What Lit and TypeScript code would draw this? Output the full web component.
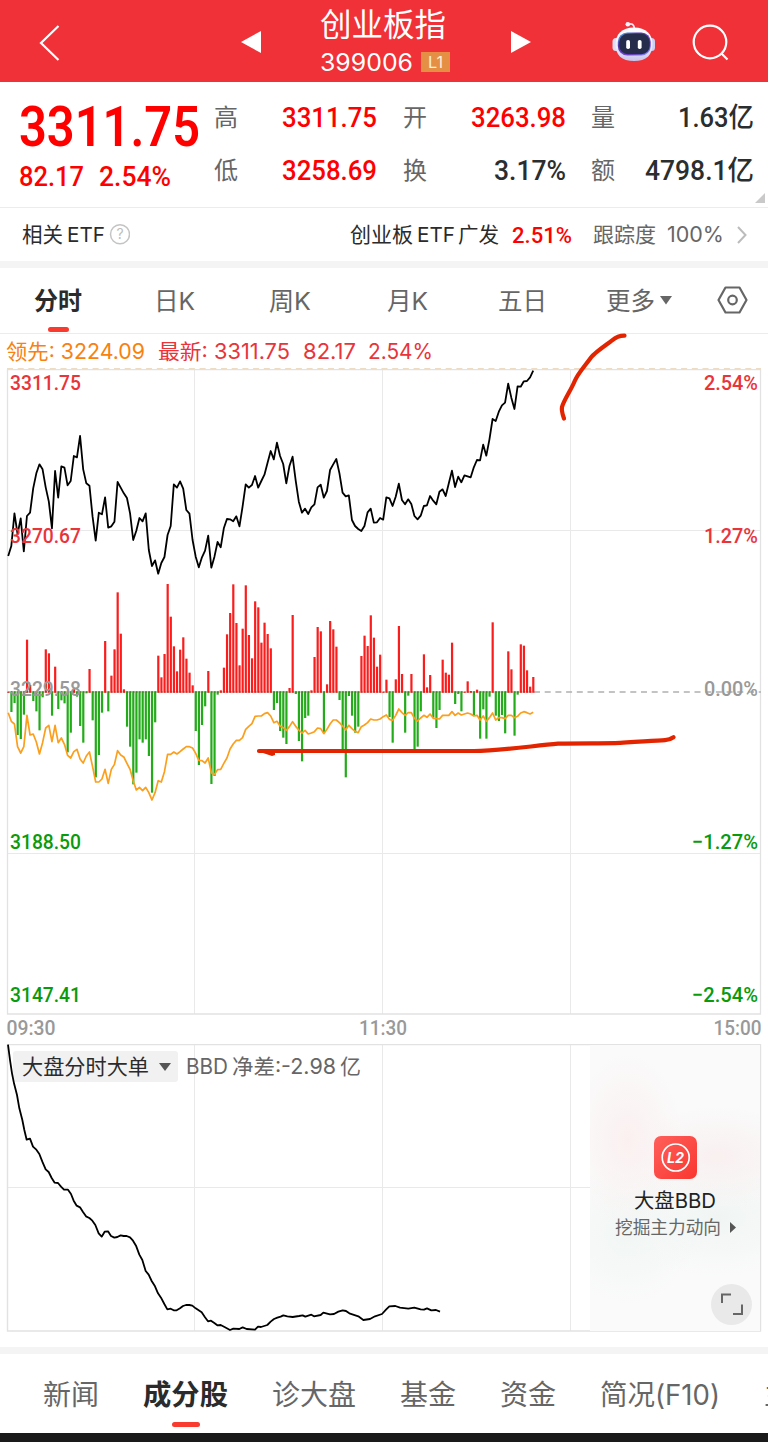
import { LitElement, html, svg, css } from "lit";
import { customElement } from "lit/decorators.js";

// Per-minute series, stored in thirds of a pixel on the chart canvas.
const PRICE = [588,558,460,522,475,574,468,458,385,340,313,328,382,425,505,333,413,319,323,376,363,288,292,228,328,370,377,470,542,458,463,412,503,499,485,366,383,400,414,460,540,512,474,484,460,570,618,601,641,609,591,525,498,373,383,364,386,450,461,540,590,622,592,572,527,623,590,546,562,505,477,478,484,469,499,440,373,383,375,348,383,363,344,308,273,298,248,288,312,370,318,290,362,425,458,446,462,442,433,382,374,413,393,330,313,297,340,398,409,406,480,498,507,513,498,457,446,488,487,474,479,412,415,438,410,371,420,433,418,432,468,478,467,438,436,408,422,433,395,388,408,370,332,381,350,367,346,349,352,322,300,301,254,287,238,177,183,155,136,128,71,113,147,79,80,64,63,52,32];
const FLOW = [365,426,399,495,507,434,209,345,393,424,481,382,238,250,437,290,417,391,400,547,488,355,380,468,518,370,297,451,622,555,428,213,424,317,238,67,191,358,470,530,643,608,508,518,508,558,668,457,257,322,252,42,140,229,304,239,202,266,308,346,483,585,465,409,303,642,618,374,361,293,193,129,43,159,286,176,46,195,265,94,112,218,158,192,235,420,399,483,503,522,354,135,372,513,574,444,437,361,261,171,184,488,343,153,178,230,390,538,622,378,437,488,470,258,197,228,136,203,290,254,365,329,441,518,328,168,312,488,377,312,538,530,424,253,352,315,443,474,420,269,308,314,218,402,372,424,365,334,363,436,359,506,418,506,380,157,437,453,435,490,244,298,497,374,223,227,301,350,321];
const LEAD = [428,454,462,530,549,530,436,495,492,516,552,518,474,466,515,466,518,504,523,556,564,545,538,567,579,558,546,590,636,636,627,598,640,598,583,542,555,561,580,598,632,660,652,662,652,668,690,668,632,636,605,553,553,546,552,545,537,530,530,534,550,571,572,579,564,608,614,599,598,580,564,537,522,511,511,503,478,469,461,439,438,438,431,428,438,458,454,468,473,481,470,455,469,480,489,481,492,489,485,474,476,491,478,462,450,450,458,468,480,466,476,484,488,470,465,458,447,450,450,447,440,435,448,451,436,417,428,436,428,428,445,453,444,436,442,432,445,446,447,436,436,436,425,436,429,435,432,429,432,438,436,450,438,454,443,429,450,443,443,446,436,436,443,439,429,425,428,432,427];
const BBD = "24,104 30,150 36,190 42,220 51,255 58,295 67,330 73,360 80,389 90,386 99,410 108,418 118,432 127,455 137,478 146,486 155,504 164,518 174,519 183,530 192,539 204,539 213,552 221,572 230,587 240,592 249,606 258,619 268,624 277,632 286,645 296,670 305,680 314,665 324,664 333,678 343,683 352,681 362,676 371,678 380,678 390,682 399,692 408,707 418,734 427,750 437,783 446,794 455,813 465,829 474,850 483,863 493,882 502,898 512,896 521,901 530,901 540,895 549,888 558,885 568,885 577,887 587,895 605,907 615,922 624,934 633,932 643,939 652,946 662,945 675,952 690,960 700,956 718,957 728,952 740,957 765,959 774,950 783,951 802,945 812,935 822,927 832,923 842,920 850,916 862,919 878,921 897,918 908,916 916,920 934,914 942,919 962,915 970,908 990,913 1002,912 1015,905 1028,901 1038,903 1048,910 1075,919 1090,930 1110,927 1125,919 1146,912 1158,899 1168,889 1186,888 1200,893 1225,896 1243,893 1262,898 1272,899 1281,895 1294,901 1308,900 1320,905";

const X0 = 8.2;
const STEP = 3.125;
const BASE = 692;

const line = (data: number[], top: number) =>
  data.map((v, i) => `${(X0 + i * STEP).toFixed(2)},${(top + v / 3).toFixed(2)}`).join(" ");

// A run of text fitted to an exact advance width.
const label = (text: string, width: number, size: number, cls = "") => html`<svg
  class="label ${cls}" width=${width} height=${size} font-size=${size}>
  <text x="0" y=${size * 0.87} textLength=${width} lengthAdjust="spacingAndGlyphs">${text}</text>
</svg>`;

@customElement("quote-header")
export class QuoteHeader extends LitElement {
  static styles = css`
    :host { display: block; height: 82px; background: #f03137; color: #fff; font-family: Inter, "Noto Sans CJK SC", sans-serif; }
    .bar { height: 82px; display: grid; grid-template-columns: 241px 79px 130px 60px 102px 80px 76px; }
    .label { display: block; overflow: visible; fill: currentColor; }
    .mid { display: flex; flex-direction: column; padding-top: 7.500px; }
    .code { display: flex; align-items: center; gap: 8px; margin-top: 10.500px; }
    .badge { width: 29px; height: 20px; background: #e58f44; display: flex; align-items: center; justify-content: center; color: #fdf0df; }
    .icon { display: block; overflow: visible; }
  `;
  render() {
    return html`<div class="bar">
      <svg class="icon" width="241" height="82"><path d="M58.500 26 41 43l17.500 17" fill="none" stroke="#fff" stroke-width="2.200"/></svg>
      <svg class="icon" width="79" height="82"><path d="M0 42 20 31v22z" fill="#fff"/></svg>
      <div class="mid">
        ${label("创业板指", 126, 32)}
        <div class="code">${label("399006", 93, 24.5)}<div class="badge">${label("L1", 15, 16)}</div></div>
      </div>
      <svg class="icon" width="60" height="82"><path d="M81 42 61 31v22z" fill="#fff"/></svg>
      <span></span>
      <svg class="icon" width="80" height="82" viewBox="612 0 80 82">
        <defs>
          <linearGradient id="shell" x1="0" y1="0" x2="0" y2="1"><stop offset="0" stop-color="#fff"/><stop offset=".6" stop-color="#ececfb"/><stop offset="1" stop-color="#c5c3ec"/></linearGradient>
          <linearGradient id="visor" x1="0" y1="0" x2="1" y2="1"><stop offset="0" stop-color="#4bbcf0"/><stop offset=".3" stop-color="#5535a8"/><stop offset=".7" stop-color="#7d48dc"/><stop offset="1" stop-color="#7a9bf4"/></linearGradient>
        </defs>
        <path d="M628 24.500q6-2.500 6.300 4.500" fill="none" stroke="#f3e8f5" stroke-width="1.800"/>
        <circle cx="627.800" cy="24.300" r="2.300" fill="#f8f4fb"/>
        <rect x="612.500" y="38" width="8" height="13" rx="3.500" fill="#dcdcf4"/><rect x="647" y="38" width="8" height="13" rx="3.500" fill="#c9d0f4"/>
        <path d="M634 27.500c12 0 18.500 7 18.500 16.500 0 11-6 17-18.500 17s-18.500-6-18.500-17c0-9.500 6.500-16.500 18.500-16.500z" fill="url(#shell)"/>
        <rect x="617.800" y="32.500" width="33" height="23" rx="9.500" fill="url(#visor)"/>
        <rect x="619.300" y="33.700" width="30.500" height="20.500" rx="8.500" fill="#262d4c"/>
        <rect x="626.200" y="40" width="3.800" height="9" rx="1.800" fill="#fff"/><rect x="637.800" y="40" width="3.800" height="9" rx="1.800" fill="#fff"/>
      </svg>
      <svg class="icon" width="76" height="82"><g fill="none" stroke="#fff" stroke-width="2.200"><circle cx="18" cy="42" r="16.300"/><path d="m29 53 6.500 6.500"/></g></svg>
    </div>`;
  }
}

@customElement("quote-stats")
export class QuoteStats extends LitElement {
  static styles = css`
    :host { display: block; background: #fff; font-family: Roboto, "Noto Sans CJK SC", sans-serif; font-weight: 500; }
    .panel { position: relative; height: 126px; display: grid; grid-template-columns: 195px 540px; border-bottom: 1px solid #ececec; padding-left: 19px; box-sizing: border-box; }
    .label { display: block; overflow: visible; fill: currentColor; }
    .red { color: #fd0101; }
    .dark { color: #2b2e2f; }
    .tag { color: #666; font-weight: 400; }
    .last { padding-top: 15px; }
    .big { font-weight: 600; }
    .change { display: flex; gap: 15px; margin-top: 9px; margin-left: -0.500px; }
    .grid { display: grid; grid-template-columns: 163px 163px 163px; column-gap: 25.500px; row-gap: 28px; padding-top: 22.500px; align-content: start; }
    .cell { display: flex; justify-content: space-between; align-items: center; height: 25px; }
    .corner { position: absolute; right: 3px; bottom: 4px; }
  `;
  render() {
    const cells: [string, string, number, string][] = [
      ["高", "3311.75", 95, "red"], ["开", "3263.98", 95, "red"], ["量", "1.63亿", 76, "dark"],
      ["低", "3258.69", 95, "red"], ["换", "3.17%", 72, "dark"], ["额", "4798.1亿", 109, "dark"],
    ];
    return html`<div class="panel">
      <div class="last">
        ${label("3311.75", 181, 56, "red big")}
        <div class="change red">${label("82.17", 65, 27)}${label("2.54%", 72, 27)}</div>
      </div>
      <div class="grid">${cells.map(([k, v, w, c]) => html`<div class="cell">${label(k, 24, 24, "tag")}${label(v, w, 27.5, c)}</div>`)}</div>
      <svg class="corner" width="10" height="10"><path d="M10 0v10H0z" fill="#c9c9c9"/></svg>
    </div>`;
  }
}

@customElement("etf-row")
export class EtfRow extends LitElement {
  static styles = css`
    :host { display: block; background: #fff; border-bottom: 7px solid #f4f4f4; font-family: Inter, "Noto Sans CJK SC", sans-serif; }
    .row { height: 53px; display: flex; align-items: center; padding: 0 21px 0 22px; }
    .label { display: block; overflow: visible; fill: currentColor; flex: none; }
    .dark { color: #2b2b2b; }
    .etf { margin: 0 3.500px 0 4px; }
    .red { color: #fd0101; font-weight: 500; margin: 0 21px 0 13px; font-family: Roboto, sans-serif; }
    .gray { color: #666; }
    .space { flex: 1; }
    .pct { margin: 0 13px 0 11px; }
  `;
  render() {
    return html`<div class="row">
      ${label("相关", 41, 21, "dark")}${label("ETF", 38, 20.5, "dark etf")}
      <svg width="21" height="21"><circle cx="11" cy="10.300" r="9.500" fill="none" stroke="#c4c4c4" stroke-width="1.500"/><text x="11" y="15.300" text-anchor="middle" font-size="14" fill="#bdbdbd">?</text></svg>
      <span class="space"></span>
      ${label("创业板", 63, 21, "dark")}${label("ETF", 38, 20.5, "dark etf")}${label("广发", 41, 21, "dark")}
      ${label("2.51%", 60, 22.5, "red")}
      ${label("跟踪度", 63, 21, "gray")}${label("100%", 57, 21, "gray pct")}
      <svg width="10" height="20"><path d="m1 2 7.500 8L1 18" fill="none" stroke="#bcbcbc" stroke-width="2"/></svg>
    </div>`;
  }
}

@customElement("period-tabs")
export class PeriodTabs extends LitElement {
  static styles = css`
    :host { display: block; background: #fff; border-bottom: 1px solid #ececec; font-family: Inter, "Noto Sans CJK SC", sans-serif; }
    .tabs { height: 65px; display: grid; grid-template-columns: 120px 115px 118px 111px 108px 111px 31px; padding-left: 34px; color: #666; }
    .tab { display: flex; flex-direction: column; padding-top: 21px; }
    .row { display: flex; align-items: center; gap: 5px; }
    .label { display: block; overflow: visible; fill: currentColor; }
    .on { color: #2b2b2b; font-weight: 700; }
    .mark { width: 21px; height: 5px; border-radius: 2.500px; background: #f93a2f; margin: 13px 0 0 14px; }
    .gear { display: block; margin-top: 18px; }
  `;
  render() {
    return html`<div class="tabs">
      <div class="tab on">${label("分时", 48, 24.5)}<div class="mark"></div></div>
      <div class="tab">${label("日K", 41, 24.5)}</div>
      <div class="tab">${label("周K", 42, 24.5)}</div>
      <div class="tab">${label("月K", 41, 24.5)}</div>
      <div class="tab">${label("五日", 49, 24.5)}</div>
      <div class="tab"><div class="row">${label("更多", 49, 24.5)}<svg width="12" height="10"><path d="M0 0h12L6 8.500z" fill="#666"/></svg></div></div>
      <svg class="gear" width="32" height="28"><g fill="none" stroke="#666" stroke-width="2.200"><path d="M8.500 1.500h14L29.500 14l-7 12.500h-14L1.500 14z" stroke-linejoin="round"/><circle cx="15.500" cy="14" r="4.300"/></g></svg>
    </div>`;
  }
}

@customElement("minute-chart")
export class MinuteChart extends LitElement {
  static styles = css`
    :host { display: block; background: #fff; font-family: Roboto, "Noto Sans CJK SC", sans-serif; }
    .legend { height: 35px; padding-left: 6px; display: flex; align-items: center; font-family: Inter, "Noto Sans CJK SC", sans-serif; }
    .label { display: block; overflow: visible; fill: currentColor; }
    .orange { color: #f88110; margin-right: 13px; }
    .red { color: #e9343a; }
    .change { margin: 0 12.500px; }
    .plot { display: block; overflow: visible; position: relative; z-index: 1; }
    .axis { font-size: 21px; font-weight: 500; }
    .up { fill: #e9343a; }
    .down { fill: #0a9a0a; }
    .flat { fill: #999; }
    .stroke { fill: none; stroke: #e22500; stroke-linecap: round; stroke-linejoin: round; stroke-width: 4.200; }
  `;
  render() {
    const rows: [string, string, number, string][] = [
      ["3311.75", "2.54%", 390, "up"], ["3270.67", "1.27%", 543, "up"], ["3229.58", "0.00%", 695.5, "flat"],
      ["3188.50", "−1.27%", 849, "down"], ["3147.41", "−2.54%", 1002, "down"],
    ];
    return html`
      <div class="legend">
        ${label("领先: 3224.09", 139, 21, "orange")}
        ${label("最新: 3311.75", 132, 21, "red")}
        ${label("82.17", 53, 21, "red change")}
        ${label("2.54%", 65, 21, "red")}
      </div>
      <svg class="plot" width="768" height="675" viewBox="0 369 768 675">
        <g stroke="#e9e9e9" fill="none">
          <path d="M8 530.500H761M8 853.500H761M194.500 369V1014M382.500 369V1014M570.500 369V1014"/>
          <path d="M7.500 369.700H760.500V1014H7.500z" stroke="#e2e2e2" stroke-width="1.300"/>
        </g>
        <path d="M7 368.800H761" stroke="#eddcc3" stroke-width="1.500" stroke-dasharray="6 4.700"/>
        <path d="M534 692H761" stroke="#b0b0b0" stroke-width="1.600" stroke-dasharray="6 4.700"/>
        ${FLOW.map((v, i) => {
          const end = 570 + v / 3;
          const up = v < 367;
          const x = X0 + i * STEP - 1;
          return svg`<rect x=${x} y=${up ? end : BASE - 0.8} width="2.200" height=${up ? BASE + 0.8 - end : end - BASE + 0.8} fill=${up ? "#fb1c1c" : "#23ab1a"}></rect>`;
        })}
        <path d="M8 692H533" stroke="#70402c" stroke-opacity=".6" stroke-width="1" stroke-dasharray="2 1.125"/>
        <polyline points=${line(LEAD, 570)} fill="none" stroke="#fb9f1c" stroke-width="1.700" stroke-linejoin="round"/>
        <polyline points=${line(PRICE, 360)} fill="none" stroke="#000" stroke-width="1.800" stroke-linejoin="round"/>
        <g class="axis">
          ${rows.map(([l, r, y, c]) => svg`
            <text class=${c} x="10" y=${y} textLength="71" lengthAdjust="spacingAndGlyphs">${l}</text>
            <text class=${c} x="758" y=${y} text-anchor="end" textLength=${r.length > 5 ? 66 : 54} lengthAdjust="spacingAndGlyphs">${r}</text>`)}
          <text class="flat" x="6.500" y="1035" textLength="49" lengthAdjust="spacingAndGlyphs">09:30</text>
          <text class="flat" x="359" y="1035" textLength="48" lengthAdjust="spacingAndGlyphs">11:30</text>
          <text class="flat" x="713.500" y="1035" textLength="48" lengthAdjust="spacingAndGlyphs">15:00</text>
        </g>
        <path class="stroke" d="M624.500 335.700C617 335.500 614 339 610 342C603 347 594 353.500 591 357.500C585 366 578 373 574.500 381.500C571 390 564 400 562 407C561.200 411 563 415.500 564 418.500"/>
        <path class="stroke" d="M259 751H474C500 751 535 745.500 558 743.700C580 743 600 743.500 615 743.200C632 742.500 655 740.500 665 740.200C669 740 671 739 673.500 737.200"/>
        <path d="M257 751 272 756 275 755V751z" fill="#e22500"/>
      </svg>`;
  }
}

@customElement("bbd-chart")
export class BbdChart extends LitElement {
  static styles = css`
    :host { display: block; background: #fff; border-bottom: 7px solid #f4f4f4; font-family: Inter, "Noto Sans CJK SC", sans-serif; }
    .wrap { position: relative; height: 303px; display: flex; justify-content: space-between; align-items: flex-start; padding-right: 8px; }
    .plot { position: absolute; left: 0; top: 0; }
    .label { display: block; overflow: visible; fill: currentColor; }
    .head { position: relative; display: flex; align-items: center; padding: 7px 0 0 13px; gap: 4px; color: #666; }
    .pick { width: 165px; height: 31px; box-sizing: border-box; border-radius: 3px; background: #f1f1f1; display: flex; align-items: center; padding-left: 9px; gap: 10px; margin-right: 4px; color: #2b2b2b; }
    .promo { position: relative; width: 170px; height: 286px; margin-top: 1px; box-sizing: border-box; padding-top: 91px; display: flex; flex-direction: column; align-items: center;
      background:
        radial-gradient(ellipse 55px 85px at 22% 33%, #fbf0f0 0%, #fbf0f000 100%),
        radial-gradient(ellipse 90px 50px at 75% 39%, #f9f0f0 0%, #f9f0f000 100%),
        radial-gradient(ellipse 70px 70px at 22% 66%, #f1f6f4 0%, #f1f6f400 100%),
        radial-gradient(ellipse 100px 60px at 75% 60%, #f0f5f3 0%, #f0f5f300 100%), #fafafa; }
    .name { margin-top: 11px; color: #222; }
    .more { display: flex; align-items: center; gap: 9px; margin: 8px 0 0 1px; color: #666; }
    .full { position: absolute; right: 8px; bottom: 6px; width: 41px; height: 41px; }
    .l2 { font: italic 700 15px Inter, sans-serif; }
  `;
  render() {
    return html`<div class="wrap">
      <svg class="plot" width="768" height="303">
        <g fill="none" stroke="#e9e9e9"><path d="M8 143.500H590M194.500 1V287M382.500 1V287M570.500 1V287"/><path d="M7.500 .5H760.500V287H7.500z" stroke="#e2e2e2" stroke-width="1.400"/></g>
      </svg>
      <div class="head">
        <div class="pick">${label("大盘分时大单", 127, 21)}<svg width="12" height="8"><path d="M0 0h12L6 8z" fill="#555"/></svg></div>
        ${label("BBD", 42, 21)}${label("净差:-2.98", 104, 21)}${label("亿", 21, 21)}
      </div>
      <svg class="plot" width="590" height="303" viewBox="0 1044 590 303"><g transform="translate(0 1010) scale(.33333)"><polyline points=${BBD} fill="none" stroke="#000" stroke-width="5.400" stroke-linejoin="round"/></g></svg>
      <div class="promo">
        <svg width="43" height="43"><defs><linearGradient id="l2" x1="0" y1="0" x2="1" y2="1"><stop stop-color="#ff5f5b"/><stop offset="1" stop-color="#f93730"/></linearGradient></defs>
          <rect width="43" height="43" rx="7" fill="url(#l2)"/><circle cx="21.700" cy="21.500" r="13.500" fill="none" stroke="#fff" stroke-width="1.700"/><text class="l2" x="13" y="27" textLength="17" lengthAdjust="spacingAndGlyphs" fill="#fff">L2</text></svg>
        <div class="name">${label("大盘BBD", 82, 20.5)}</div>
        <div class="more">${label("挖掘主力动向", 106, 17.7)}<svg width="6" height="11"><path d="M0 0v11l6-5.500z" fill="#555"/></svg></div>
        <svg class="full"><circle cx="20.500" cy="20.500" r="20.500" fill="#e9e9e9"/><path d="M11 19v-8.500h9M22 30h9v-9.500" fill="none" stroke="#666" stroke-width="2"/></svg>
      </div>
    </div>`;
  }
}

@customElement("section-tabs")
export class SectionTabs extends LitElement {
  static styles = css`
    :host { display: block; background: #fff; border-bottom: 9px solid #1a1a1a; overflow: hidden; font-family: Inter, "Noto Sans CJK SC", sans-serif; }
    .tabs { height: 79px; display: grid; grid-template-columns: 100px 128.500px 128.500px 100px 100px 164px 28px; padding-left: 43px; color: #666; width: 900px; box-sizing: border-box; }
    .tab { padding-top: 25.500px; }
    .label { display: block; overflow: visible; fill: currentColor; }
    .on { color: #2b2b2b; font-weight: 700; }
    .mark { width: 28px; height: 5.500px; border-radius: 2.500px; background: #f93a2f; margin: 14px 0 0 29px; }
  `;
  render() {
    return html`<div class="tabs">
      <div class="tab">${label("新闻", 56, 28.3)}</div>
      <div class="tab on">${label("成分股", 85, 28.3)}<div class="mark"></div></div>
      <div class="tab">${label("诊大盘", 84, 28.3)}</div>
      <div class="tab">${label("基金", 56, 28.3)}</div>
      <div class="tab">${label("资金", 56, 28.3)}</div>
      <div class="tab">${label("简况(F10)", 120, 28.3)}</div>
      <div class="tab">${label("主", 28, 28.3)}</div>
    </div>`;
  }
}

@customElement("app-root")
export class AppRoot extends LitElement {
  static styles = css`
    :host { display: block; width: 768px; height: 1442px; overflow: hidden; background: #fff; }
  `;
  render() {
    return html`<quote-header></quote-header><quote-stats></quote-stats><etf-row></etf-row><period-tabs></period-tabs><minute-chart></minute-chart><bbd-chart></bbd-chart><section-tabs></section-tabs>`;
  }
}
